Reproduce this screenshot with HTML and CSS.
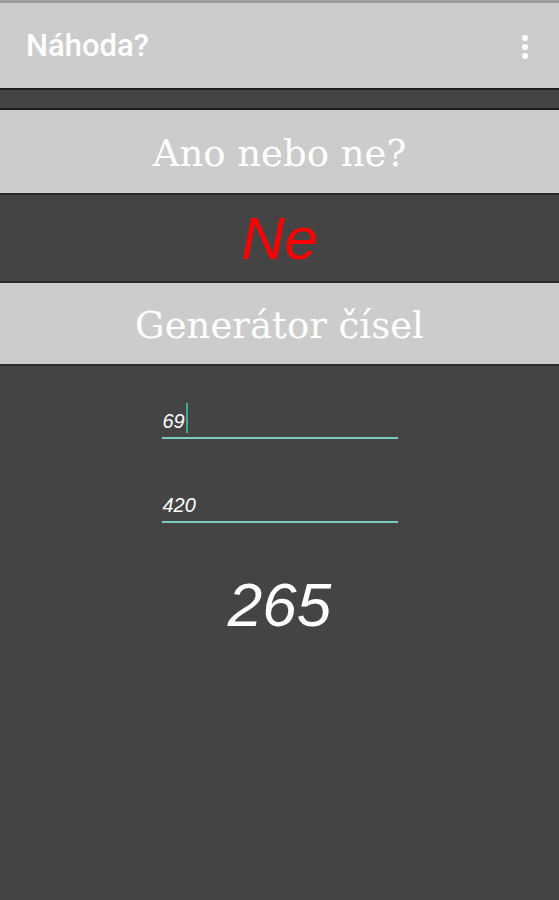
FILE: index.html
```html
<!DOCTYPE html>
<html lang="cs">
<head>
<meta charset="utf-8">
<title>Náhoda?</title>
<link rel="stylesheet" href="styles.css">
</head>
<body>
<div class="status"></div>
<header class="toolbar">
  <span class="title">Náhoda?</span>
  <svg class="menu" width="8" height="26" viewBox="0 0 8 26">
    <circle cx="4" cy="4" r="3" fill="#fff"/>
    <circle cx="4" cy="13" r="3" fill="#fff"/>
    <circle cx="4" cy="22" r="3" fill="#fff"/>
  </svg>
</header>
<div class="gap"></div>
<button class="btn">Ano nebo ne?</button>
<div class="answer">Ne</div>
<button class="btn btn2">Generátor čísel</button>
<main class="form">
  <div class="field"><span class="val">69</span><span class="cursor"></span></div>
  <div class="field field2"><span class="val">420</span></div>
  <div class="result">265</div>
</main>
</body>
</html>
```
FILE: styles.css
```css
html, body {
  margin: 0;
  padding: 0;
  background: #444444;
  height: 900px;
  overflow: hidden;
}
body {
  font-family: Roboto, "Liberation Sans", sans-serif;
}
.status {
  height: 3px;
  background: #9d9d9d;
}
.toolbar {
  height: 85px;
  box-sizing: border-box;
  background: #cccccc;
  display: flex;
  align-items: center;
  justify-content: space-between;
  padding: 0 30px 0 26px;
  border-bottom: 2px solid #1d1d1d;
  height: 87px;
}
.title {
  color: #ffffff;
  font-size: 31px;
  font-weight: 500;
  line-height: 36px;
}
.menu {
  margin-top: 2px;
}
.gap {
  height: 20px;
  box-sizing: border-box;
  border-bottom: 2px solid #1d1d1d;
}
.btn {
  display: block;
  box-sizing: border-box;
  width: 100%;
  height: 85px;
  margin: 0;
  padding: 5px 0 0;
  border: none;
  border-bottom: 2px solid #2a2a2a;
  background: #cccccc;
  color: #ffffff;
  font-family: "DejaVu Serif", serif;
  font-size: 37px;
  line-height: 44px;
  text-align: center;
}
.btn2 {
  height: 85px;
  border-top: 2px solid #2a2a2a;
}
.answer {
  height: 86px;
  display: flex;
  align-items: center;
  justify-content: center;
  color: #ff0000;
  font-family: "Liberation Sans", sans-serif;
  font-style: italic;
  font-size: 60px;
  line-height: 1;
  padding-top: 2px;
  box-sizing: border-box;
}
.form {
  display: flex;
  flex-direction: column;
  align-items: center;
  padding-top: 37px;
}
.field {
  width: 236px;
  height: 36px;
  border-bottom: 2px solid #7ecbc2;
  display: flex;
  align-items: flex-end;
  padding-bottom: 5px;
  box-sizing: border-box;
}
.field2 {
  margin-top: 48px;
}
.val {
  color: #ffffff;
  font-family: "Liberation Sans", sans-serif;
  font-style: italic;
  font-size: 20px;
  line-height: 22px;
  margin-left: 1px;
}
.cursor {
  display: inline-block;
  width: 2px;
  height: 30px;
  background: #3fa99d;
  margin-left: 1px;
  margin-bottom: -1px;
}
.result {
  margin-top: 47px;
  color: #ffffff;
  font-family: "Liberation Sans", sans-serif;
  font-style: italic;
  font-size: 62px;
  line-height: 70px;
}
```
